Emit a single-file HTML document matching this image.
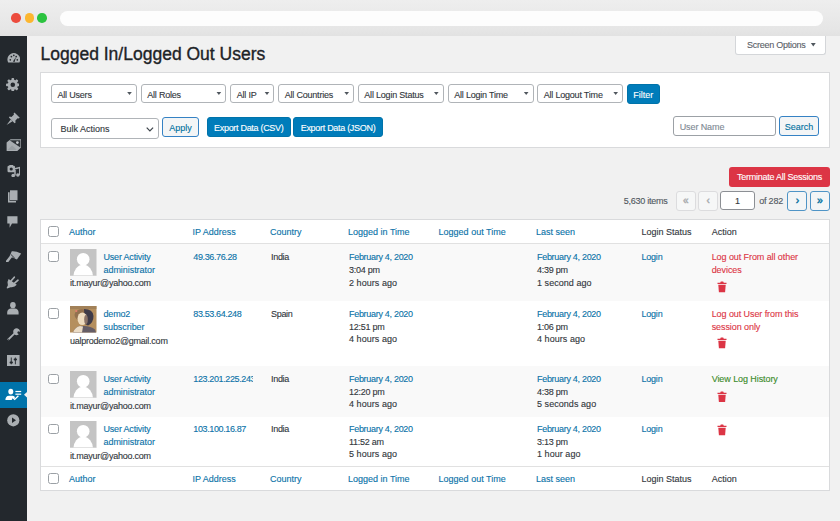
<!DOCTYPE html>
<html><head><meta charset="utf-8">
<style>
*{box-sizing:border-box;margin:0;padding:0}
html,body{width:840px;height:521px;overflow:hidden}
body{position:relative;background:#f1f1f1;font-family:"Liberation Sans",sans-serif;color:#32373c;font-size:9px;-webkit-text-stroke:0.12px currentColor}
.a{position:absolute;white-space:nowrap}
#chrome{left:0;top:0;width:840px;height:36px;background:linear-gradient(#eeeeee,#e6e6e6 80%,#e2e2e2)}
.dot{position:absolute;top:13.4px;width:9.6px;height:9.6px;border-radius:50%}
#addr{left:59.5px;top:10.5px;width:763.5px;height:15.5px;border-radius:8px;background:#fdfdfd}
#side{left:0;top:36px;width:27px;height:485px;background:#23282d}
#title{left:40.5px;top:44px;font-size:17.5px;line-height:20px;color:#1d2327;-webkit-text-stroke:0.35px #1d2327}
#so{left:734.9px;top:36px;width:91.5px;height:18.5px;background:#fff;border:1px solid #d4d6d9;border-top:0;border-radius:0 0 3px 3px;color:#5b6168;font-size:9px;line-height:19.2px;padding-left:11px;letter-spacing:-0.25px}
#fbox{left:40px;top:72px;width:790px;height:75.5px;background:#fff;border:1px solid #d9dadc}
.sel{position:absolute;height:18.8px;top:84.1px;border:1px solid #b0b4b8;border-radius:3px;background:#fff;font-size:9px;line-height:18px;padding-top:1.3px;padding-left:5.5px;color:#32373c;letter-spacing:-0.2px}
.sel i{position:absolute;right:3.8px;top:6.5px;width:5.4px;height:3.4px;background:#50575e;clip-path:polygon(0 0,100% 0,50% 100%)}
.btn{position:absolute;border-radius:3px;font-size:9px;text-align:center;white-space:nowrap}
.pri{background:#007cba;border:1px solid #0073aa;color:#fff;letter-spacing:-0.3px}
.sec{background:#f3f5f6;border:1px solid #3582c4;color:#0071a1}
#tbl{left:40px;top:219px;width:790px;height:272.3px;background:#fff;border:1px solid #d9dadc}
.row{position:absolute;left:41px;width:788px}
.cb{position:absolute;width:11px;height:10.5px;border:1.1px solid #9ba0a5;border-radius:2.5px;background:#fff}
.hd{position:absolute;font-size:9px;line-height:12px;white-space:nowrap}
.t{position:absolute;font-size:9px;line-height:12.8px;white-space:nowrap;color:#32373c;letter-spacing:-0.18px}
.av{position:absolute;width:26.5px;height:26.5px;overflow:hidden}
.ip{width:59.6px;overflow:hidden}
.dt{letter-spacing:-0.3px}
.pg{position:absolute;top:190.5px;height:20px;width:20.2px;border-radius:3px;text-align:center;line-height:17.5px;font-size:10.5px;font-weight:normal;-webkit-text-stroke:0.4px currentColor}
.dis{background:#f6f7f7;border:1px solid #dcdcde;color:#a7aaad;font-weight:normal;font-size:10px}
.ic{position:absolute}
.lnk{color:#0a72a8}
.red{color:#dc3545}
.grn{color:#3b8b2a}
</style></head><body>
<div class="a" id="chrome"></div>
<div class="dot" style="left:11.3px;background:#ec4c3e"></div>
<div class="dot" style="left:24.5px;background:#fcb62f"></div>
<div class="dot" style="left:37.4px;background:#2bc33f"></div>
<div class="a" id="addr"></div>
<div class="a" id="side"></div>
<svg class="ic" style="left:6.6px;top:53.2px" width="13.6" height="10" viewBox="0 0 13.6 10"><path d="M1.2 9.6 A6.4 6.4 0 1 1 12.4 9.6 Z" fill="#a9aeb2"/><circle cx="3.3" cy="6.8" r="0.85" fill="#23282d"/><circle cx="4.4" cy="3.6" r="0.85" fill="#23282d"/><circle cx="6.8" cy="2.3" r="0.85" fill="#23282d"/><circle cx="9.2" cy="3.6" r="0.85" fill="#23282d"/><circle cx="10.3" cy="6.8" r="0.85" fill="#23282d"/><path d="M5.9 8.6 L9 3.9 L7.6 9Z" fill="#23282d"/></svg>
<svg class="ic" style="left:5.9px;top:77.7px" width="13.6" height="13.6" viewBox="0 0 13.6 13.6"><circle cx="6.8" cy="6.8" r="5.1" fill="#a9aeb2"/><rect x="5.45" y="0" width="2.7" height="13.6" rx="0.9" fill="#a9aeb2" transform="rotate(0 6.8 6.8)"/><rect x="5.45" y="0" width="2.7" height="13.6" rx="0.9" fill="#a9aeb2" transform="rotate(45 6.8 6.8)"/><rect x="5.45" y="0" width="2.7" height="13.6" rx="0.9" fill="#a9aeb2" transform="rotate(90 6.8 6.8)"/><rect x="5.45" y="0" width="2.7" height="13.6" rx="0.9" fill="#a9aeb2" transform="rotate(135 6.8 6.8)"/><circle cx="6.8" cy="6.8" r="2.3" fill="#23282d"/></svg>
<svg class="ic" style="left:5.8px;top:111.8px" width="14.2" height="13.4" viewBox="0 0 14.2 13.4"><path d="M8.5 0.5 L13.8 5.8 L12.6 6.6 L11.6 6.2 L9.3 8.7 L9.6 10.6 L8.6 11.3 L2.9 5.6 L3.6 4.6 L5.5 4.9 L8 2.6 L7.6 1.6Z" fill="#a9aeb2"/><path d="M4.8 7.6 L6.5 9.3 L0.6 13 Z" fill="#a9aeb2"/></svg>
<svg class="ic" style="left:5.8px;top:138.6px" width="15.6" height="12.4" viewBox="0 0 15.6 12.4"><path d="M0.6 3.4 L4.6 0.3 L15.2 0.3 L15.2 8.2 L11.2 12.1 L0.6 12.1Z" fill="#a9aeb2"/><path d="M3.6 1.2 L14.4 1.2 L14.4 8.4Z" fill="#2f3439"/><circle cx="11.4" cy="3.6" r="1.35" fill="#c8ccd0"/><path d="M1.5 11 L6 6.5 L9 9 L10.5 11Z" fill="#8f9499" opacity="0.6"/></svg>
<svg class="ic" style="left:6.7px;top:164.7px" width="13.5" height="12.1" viewBox="0 0 13.5 12.1"><rect x="0.5" y="0.8" width="7.5" height="6.5" rx="1.2" fill="#a9aeb2"/><rect x="2.3" y="0" width="3.8" height="1.5" fill="#a9aeb2"/><circle cx="4.2" cy="4" r="1.6" fill="#23282d"/><path d="M7 4 L12.8 2.6 L12.8 10" stroke="#a9aeb2" stroke-width="1.5" fill="none"/><circle cx="10.9" cy="10" r="1.8" fill="#a9aeb2"/><path d="M8 5 L8 10.5" stroke="#a9aeb2" stroke-width="1.5"/><circle cx="6.2" cy="10.5" r="1.8" fill="#a9aeb2"/></svg>
<svg class="ic" style="left:7.4px;top:189.6px" width="10.8" height="13.4" viewBox="0 0 10.8 13.4"><rect x="3" y="0.3" width="7.5" height="10" fill="#a9aeb2"/><path d="M1.8 2.2 L1.8 11.8 L9 11.8" stroke="#a9aeb2" stroke-width="1.6" fill="none"/></svg>
<svg class="ic" style="left:7.4px;top:215.8px" width="10.8" height="12.2" viewBox="0 0 10.8 12.2"><path d="M0.3 0.3 L10.5 0.3 L10.5 7.5 L5 7.5 L2.6 11.8 L2.6 7.5 L0.3 7.5Z" fill="#a9aeb2"/></svg>
<svg class="ic" style="left:5.8px;top:249.8px" width="15.5" height="12.7" viewBox="0 0 15.5 12.7"><path d="M5.8 1.2 Q10 0.8 15.2 3.6 L10.9 9.4 L3.6 6.2Z" fill="#a9aeb2"/><path d="M4.9 4.5 L8.8 8.3" stroke="#23282d" stroke-width="0.9"/><path d="M4.6 7 L1.2 11.3" stroke="#a9aeb2" stroke-width="2.6" stroke-linecap="round"/></svg>
<svg class="ic" style="left:6.3px;top:276.3px" width="13.3" height="12.7" viewBox="0 0 13.3 12.7"><path d="M2.6 3 L10.8 8.8 Q8.5 11.8 4.5 11.2 L1.3 12.6 L0.6 11.9 L1.9 9.2 Q0.9 5.5 2.6 3Z" fill="#a9aeb2"/><path d="M5.2 4.8 L8.3 1.2" stroke="#a9aeb2" stroke-width="1.7" stroke-linecap="round"/><path d="M8.6 7.2 L12 4.2" stroke="#a9aeb2" stroke-width="1.7" stroke-linecap="round"/></svg>
<svg class="ic" style="left:7.4px;top:302.4px" width="11.8" height="12.6" viewBox="0 0 11.8 12.6"><ellipse cx="5.9" cy="3.2" rx="2.8" ry="3.1" fill="#a9aeb2"/><path d="M0.2 12.4 L0.2 10 Q0.8 6.8 4 6.6 L7.8 6.6 Q11 6.8 11.6 10 L11.6 12.4Z" fill="#a9aeb2"/></svg>
<svg class="ic" style="left:6.6px;top:328.2px" width="13.3" height="12.5" viewBox="0 0 13.3 12.5"><path d="M9 0.3 Q12.8 0.2 13 3.8 L11 3.2 L10.2 5 L11.8 6.3 Q9.5 8 7.6 6.6 L2.2 12 Q0.9 12.8 0.4 11.6 Q0.2 10.9 0.9 10.4 L6.4 5.2 Q5.5 1.2 9 0.3Z" fill="#a9aeb2"/><circle cx="1.6" cy="11.2" r="0.55" fill="#23282d"/></svg>
<svg class="ic" style="left:7.2px;top:354.5px" width="12.6" height="11.5" viewBox="0 0 12.6 11.5"><rect x="0" y="0" width="12.6" height="11.4" fill="#a9aeb2"/><rect x="3.8" y="2.5" width="0.9" height="6.8" fill="#23282d"/><rect x="7.9" y="2.5" width="0.9" height="6.8" fill="#23282d"/><rect x="2.6" y="6.6" width="3.3" height="1.9" rx="0.8" fill="#23282d"/><rect x="6.7" y="3.5" width="3.3" height="1.9" rx="0.8" fill="#23282d"/></svg>
<div class="a" style="left:0;top:381.9px;width:27px;height:25.7px;background:#0073aa"></div>
<svg class="ic" style="left:4.6px;top:388.4px" width="17" height="12.4" viewBox="0 0 17 12.4"><ellipse cx="5.8" cy="3.6" rx="2.5" ry="2.9" fill="#fff"/><path d="M0.4 12 Q0.4 8 4 7.8 L7.6 7.8 Q9.6 8 10 9.5 L8.5 11 L7.8 10.3 L6.6 11.5 L7.5 12Z" fill="#fff"/><rect x="10.4" y="2.9" width="5.8" height="1.2" fill="#fff"/><rect x="10.4" y="5.6" width="5.8" height="1.2" fill="#fff"/><path d="M8.2 10 L9.7 11.4 L13.4 7.8" stroke="#fff" stroke-width="1.3" fill="none"/></svg>
<svg class="ic" style="left:24.2px;top:392px" width="3" height="5.6" viewBox="0 0 3 5.6"><path d="M3 0 L0 2.8 L3 5.6Z" fill="#f1f1f1"/></svg>
<svg class="ic" style="left:7.2px;top:414.3px" width="12.6" height="12.6" viewBox="0 0 12.6 12.6"><circle cx="6.3" cy="6.3" r="6.1" fill="#a9aeb2"/><path d="M5 3.6 L9 6.3 L5 9Z" fill="#23282d"/></svg>
<div class="a" id="title">Logged In/Logged Out Users</div>
<div class="a" id="so">Screen Options <span style="position:absolute;left:74.6px;top:6.6px;width:5.6px;height:4px;background:#50575e;clip-path:polygon(0 0,100% 0,50% 100%)"></span></div>
<div class="a" id="fbox"></div>
<div class="sel" style="left:51px;width:86px">All Users<i></i></div>
<div class="sel" style="left:140.7px;width:85.7px">All Roles<i></i></div>
<div class="sel" style="left:230.2px;width:44.3px">All IP<i></i></div>
<div class="sel" style="left:278.2px;width:76px">All Countries<i></i></div>
<div class="sel" style="left:357.8px;width:86px">All Login Status<i></i></div>
<div class="sel" style="left:447.7px;width:86px">All Login Time<i></i></div>
<div class="sel" style="left:537.2px;width:86px">All Logout Time<i></i></div>
<div class="btn pri" style="left:626.7px;top:84px;width:33.3px;height:20px;line-height:20.6px;letter-spacing:0">Filter</div>
<div class="sel" style="left:51.2px;top:118.3px;width:108px;height:20.5px;line-height:20px;padding-top:0;padding-left:8.2px;letter-spacing:0">Bulk Actions<svg style="position:absolute;left:94px;top:7.3px" width="8" height="5" viewBox="0 0 8 5"><path d="M0.7 0.7 L3.9 3.9 L7.1 0.7" stroke="#3c434a" stroke-width="1.2" fill="none"/></svg></div>
<div class="btn sec" style="left:162.3px;top:117.2px;width:36.5px;height:20.2px;line-height:20px">Apply</div>
<div class="btn pri" style="left:207px;top:117.2px;width:83.5px;height:20.2px;line-height:21px">Export Data (CSV)</div>
<div class="btn pri" style="left:293.4px;top:117.2px;width:89.3px;height:20.2px;line-height:21px">Export Data (JSON)</div>
<div class="a" style="left:673.4px;top:116px;width:103px;height:20px;border:1px solid #9ca1a6;border-radius:3px;background:#fff;color:#7e8993;font-size:9px;line-height:20.5px;padding-left:5.3px;letter-spacing:-0.1px">User Name</div>
<div class="btn sec" style="left:778.6px;top:116px;width:40.7px;height:20px;line-height:20.5px">Search</div>
<div class="btn" style="left:729.2px;top:167.4px;width:100.7px;height:19.4px;line-height:21px;background:#dc3545;color:#fff;letter-spacing:-0.25px">Terminate All Sessions</div>
<div class="a" style="left:623.7px;top:195px;font-size:9px;line-height:12px;color:#50575e;letter-spacing:-0.25px">5,630 items</div>
<div class="pg dis" style="left:675.7px">&laquo;</div>
<div class="pg dis" style="left:698.2px">&lsaquo;</div>
<div class="a" style="left:720.3px;top:190.6px;width:34.3px;height:19.5px;border:1px solid #8c8f94;border-radius:3px;background:#fff;text-align:center;line-height:18.5px;font-size:9px;color:#32373c">1</div>
<div class="a" style="left:759.2px;top:195px;font-size:9px;line-height:12px;color:#50575e;letter-spacing:-0.2px">of 282</div>
<div class="pg sec" style="left:787.3px;border-color:#4f94c6;border-width:1.2px">&rsaquo;</div>
<div class="pg sec" style="left:809.9px;border-color:#4f94c6;border-width:1.2px">&raquo;</div>
<div class="a" id="tbl"></div>
<div class="row" style="top:220.5px;height:23.5px;border-bottom:1px solid #e1e1e1"></div>
<div class="cb" style="left:48px;top:226.4px"></div>
<div class="hd lnk" style="left:69px;top:225.8px">Author</div>
<div class="hd lnk" style="left:192.4px;top:225.8px">IP Address</div>
<div class="hd lnk" style="left:270px;top:225.8px">Country</div>
<div class="hd lnk" style="left:348px;top:225.8px">Logged in Time</div>
<div class="hd lnk" style="left:438.6px;top:225.8px">Logged out Time</div>
<div class="hd lnk" style="left:536px;top:225.8px">Last seen</div>
<div class="hd " style="left:641.4px;top:225.8px">Login Status</div>
<div class="hd " style="left:711.7px;top:225.8px">Action</div>
<div class="row" style="top:244px;height:57px;background:#f9f9f9"></div>
<div class="row" style="top:301px;height:65px;background:#fff"></div>
<div class="row" style="top:366px;height:50.5px;background:#f9f9f9"></div>
<div class="row" style="top:416.5px;height:50px;background:#fff"></div>
<div class="row" style="top:466px;height:24.5px;border-top:1px solid #e1e1e1"></div>
<div class="cb" style="left:48px;top:473.3px"></div>
<div class="hd lnk" style="left:69px;top:472.7px">Author</div>
<div class="hd lnk" style="left:192.4px;top:472.7px">IP Address</div>
<div class="hd lnk" style="left:270px;top:472.7px">Country</div>
<div class="hd lnk" style="left:348px;top:472.7px">Logged in Time</div>
<div class="hd lnk" style="left:438.6px;top:472.7px">Logged out Time</div>
<div class="hd lnk" style="left:536px;top:472.7px">Last seen</div>
<div class="hd " style="left:641.4px;top:472.7px">Login Status</div>
<div class="hd " style="left:711.7px;top:472.7px">Action</div>
<div class="cb" style="left:48px;top:251.2px"></div>
<svg class="av" style="left:70.2px;top:249.0px" width="26.5" height="26.5" viewBox="0 0 26.5 26.5"><rect width="26.5" height="26.5" fill="#c4c4c4"/><circle cx="13.2" cy="10.2" r="6.3" fill="#fff"/><ellipse cx="13.2" cy="27.5" rx="9.8" ry="11.8" fill="#fff"/><rect x="0" y="26" width="26.5" height="0.5" fill="#c4c4c4"/></svg>
<div class="t lnk" style="left:103.5px;top:251.0px"><span style="letter-spacing:-0.19px">User Activity</span><br><span style="letter-spacing:-0.05px">administrator</span></div>
<div class="t" style="left:70px;top:277.3px"><span style="letter-spacing:-0.24px">it.mayur@yahoo.com</span></div>
<div class="t lnk ip" style="left:193.3px;top:251.0px"><span style="letter-spacing:-0.38px">49.36.76.28</span></div>
<div class="t" style="left:271px;top:251.0px"><span style="letter-spacing:-0.3px">India</span></div>
<div class="t" style="left:349px;top:251.0px"><span class="lnk dt">February 4, 2020</span><br><span style="letter-spacing:-0.27px">3:04 pm</span><br><span style="letter-spacing:0.05px">2 hours ago</span></div>
<div class="t" style="left:537px;top:251.0px"><span class="lnk dt">February 4, 2020</span><br><span style="letter-spacing:-0.27px">4:39 pm</span><br><span style="letter-spacing:0.05px">1 second ago</span></div>
<div class="t lnk" style="left:641.4px;top:251.0px">Login</div>
<div class="t red" style="left:711.7px;top:251.0px"><span style="letter-spacing:-0.08px">Log out From all other</span><br><span style="letter-spacing:-0.08px">devices</span></div>
<svg style="position:absolute;left:717px;top:281.0px" width="10" height="11.5" viewBox="0 0 10 11.5"><path d="M3.8 0.6 L6.2 0.6 L6.8 1.8 L9.5 1.8 L9.5 3 L0.5 3 L0.5 1.8 L3.2 1.8Z" fill="#dc3545"/><path d="M1.3 3.8 L8.7 3.8 L8.1 11.2 L1.9 11.2Z" fill="#dc3545"/></svg>
<div class="cb" style="left:48px;top:308.2px"></div>
<svg class="av" style="left:70.2px;top:306.0px" width="26.5" height="26.5" viewBox="0 0 26.5 26.5"><rect width="26.5" height="26.5" fill="#b58f5e"/><rect x="0" y="0" width="26.5" height="3" fill="#9a7a55" opacity="0.7"/><ellipse cx="12" cy="9" rx="7.5" ry="6" fill="#93714f"/><path d="M14 3 Q23 3 23.5 10 Q23.5 17 18 19.5 L15 18 Z" fill="#3f3b48"/><ellipse cx="12.3" cy="12.8" rx="4.8" ry="6.3" fill="#efdcbf"/><ellipse cx="16" cy="13.5" rx="1.8" ry="4.5" fill="#8c7468"/><path d="M3 26.5 Q5 21 10 20 L14 20 Q21 20 25 23.5 L26 26.5Z" fill="#655d66"/><path d="M3 26.5 Q5 21 10 20 L13 20.5 L12 26.5Z" fill="#ebdcc6"/><circle cx="6.3" cy="5" r="1.1" fill="#e27c6e"/></svg>
<div class="t lnk" style="left:103.5px;top:307.8px"><span style="letter-spacing:-0.19px">demo2</span><br><span style="letter-spacing:-0.05px">subscriber</span></div>
<div class="t" style="left:70px;top:334.5px"><span style="letter-spacing:-0.24px">ualprodemo2@gmail.com</span></div>
<div class="t lnk ip" style="left:193.3px;top:307.8px"><span style="letter-spacing:-0.38px">83.53.64.248</span></div>
<div class="t" style="left:271px;top:307.8px"><span style="letter-spacing:-0.3px">Spain</span></div>
<div class="t" style="left:349px;top:307.8px"><span class="lnk dt">February 4, 2020</span><br><span style="letter-spacing:-0.27px">12:51 pm</span><br><span style="letter-spacing:0.05px">4 hours ago</span></div>
<div class="t" style="left:537px;top:307.8px"><span class="lnk dt">February 4, 2020</span><br><span style="letter-spacing:-0.27px">1:06 pm</span><br><span style="letter-spacing:0.05px">4 hours ago</span></div>
<div class="t lnk" style="left:641.4px;top:307.8px">Login</div>
<div class="t red" style="left:711.7px;top:307.8px"><span style="letter-spacing:-0.08px">Log out User from this</span><br><span style="letter-spacing:-0.08px">session only</span></div>
<svg style="position:absolute;left:717px;top:337.0px" width="10" height="11.5" viewBox="0 0 10 11.5"><path d="M3.8 0.6 L6.2 0.6 L6.8 1.8 L9.5 1.8 L9.5 3 L0.5 3 L0.5 1.8 L3.2 1.8Z" fill="#dc3545"/><path d="M1.3 3.8 L8.7 3.8 L8.1 11.2 L1.9 11.2Z" fill="#dc3545"/></svg>
<div class="cb" style="left:48px;top:373.5px"></div>
<svg class="av" style="left:70.2px;top:371.4px" width="26.5" height="26.5" viewBox="0 0 26.5 26.5"><rect width="26.5" height="26.5" fill="#c4c4c4"/><circle cx="13.2" cy="10.2" r="6.3" fill="#fff"/><ellipse cx="13.2" cy="27.5" rx="9.8" ry="11.8" fill="#fff"/><rect x="0" y="26" width="26.5" height="0.5" fill="#c4c4c4"/></svg>
<div class="t lnk" style="left:103.5px;top:372.8px"><span style="letter-spacing:-0.19px">User Activity</span><br><span style="letter-spacing:-0.05px">administrator</span></div>
<div class="t" style="left:70px;top:399.5px"><span style="letter-spacing:-0.24px">it.mayur@yahoo.com</span></div>
<div class="t lnk ip" style="left:193.3px;top:372.8px"><span style="letter-spacing:-0.38px">123.201.225.243</span></div>
<div class="t" style="left:271px;top:372.8px"><span style="letter-spacing:-0.3px">India</span></div>
<div class="t" style="left:349px;top:372.8px"><span class="lnk dt">February 4, 2020</span><br><span style="letter-spacing:-0.27px">12:20 pm</span><br><span style="letter-spacing:0.05px">4 hours ago</span></div>
<div class="t" style="left:537px;top:372.8px"><span class="lnk dt">February 4, 2020</span><br><span style="letter-spacing:-0.27px">4:38 pm</span><br><span style="letter-spacing:0.05px">5 seconds ago</span></div>
<div class="t lnk" style="left:641.4px;top:372.8px">Login</div>
<div class="t grn" style="left:711.7px;top:372.8px"><span style="letter-spacing:-0.08px">View Log History</span></div>
<svg style="position:absolute;left:717px;top:390.5px" width="10" height="11.5" viewBox="0 0 10 11.5"><path d="M3.8 0.6 L6.2 0.6 L6.8 1.8 L9.5 1.8 L9.5 3 L0.5 3 L0.5 1.8 L3.2 1.8Z" fill="#dc3545"/><path d="M1.3 3.8 L8.7 3.8 L8.1 11.2 L1.9 11.2Z" fill="#dc3545"/></svg>
<div class="cb" style="left:48px;top:423.7px"></div>
<svg class="av" style="left:70.2px;top:421.4px" width="26.5" height="26.5" viewBox="0 0 26.5 26.5"><rect width="26.5" height="26.5" fill="#c4c4c4"/><circle cx="13.2" cy="10.2" r="6.3" fill="#fff"/><ellipse cx="13.2" cy="27.5" rx="9.8" ry="11.8" fill="#fff"/><rect x="0" y="26" width="26.5" height="0.5" fill="#c4c4c4"/></svg>
<div class="t lnk" style="left:103.5px;top:422.8px"><span style="letter-spacing:-0.19px">User Activity</span><br><span style="letter-spacing:-0.05px">administrator</span></div>
<div class="t" style="left:70px;top:449.5px"><span style="letter-spacing:-0.24px">it.mayur@yahoo.com</span></div>
<div class="t lnk ip" style="left:193.3px;top:422.8px"><span style="letter-spacing:-0.38px">103.100.16.87</span></div>
<div class="t" style="left:271px;top:422.8px"><span style="letter-spacing:-0.3px">India</span></div>
<div class="t" style="left:349px;top:422.8px"><span class="lnk dt">February 4, 2020</span><br><span style="letter-spacing:-0.27px">11:52 am</span><br><span style="letter-spacing:0.05px">5 hours ago</span></div>
<div class="t" style="left:537px;top:422.8px"><span class="lnk dt">February 4, 2020</span><br><span style="letter-spacing:-0.27px">3:13 pm</span><br><span style="letter-spacing:0.05px">1 hour ago</span></div>
<div class="t lnk" style="left:641.4px;top:422.8px">Login</div>
<svg style="position:absolute;left:717px;top:424.0px" width="10" height="11.5" viewBox="0 0 10 11.5"><path d="M3.8 0.6 L6.2 0.6 L6.8 1.8 L9.5 1.8 L9.5 3 L0.5 3 L0.5 1.8 L3.2 1.8Z" fill="#dc3545"/><path d="M1.3 3.8 L8.7 3.8 L8.1 11.2 L1.9 11.2Z" fill="#dc3545"/></svg>
</body></html>
